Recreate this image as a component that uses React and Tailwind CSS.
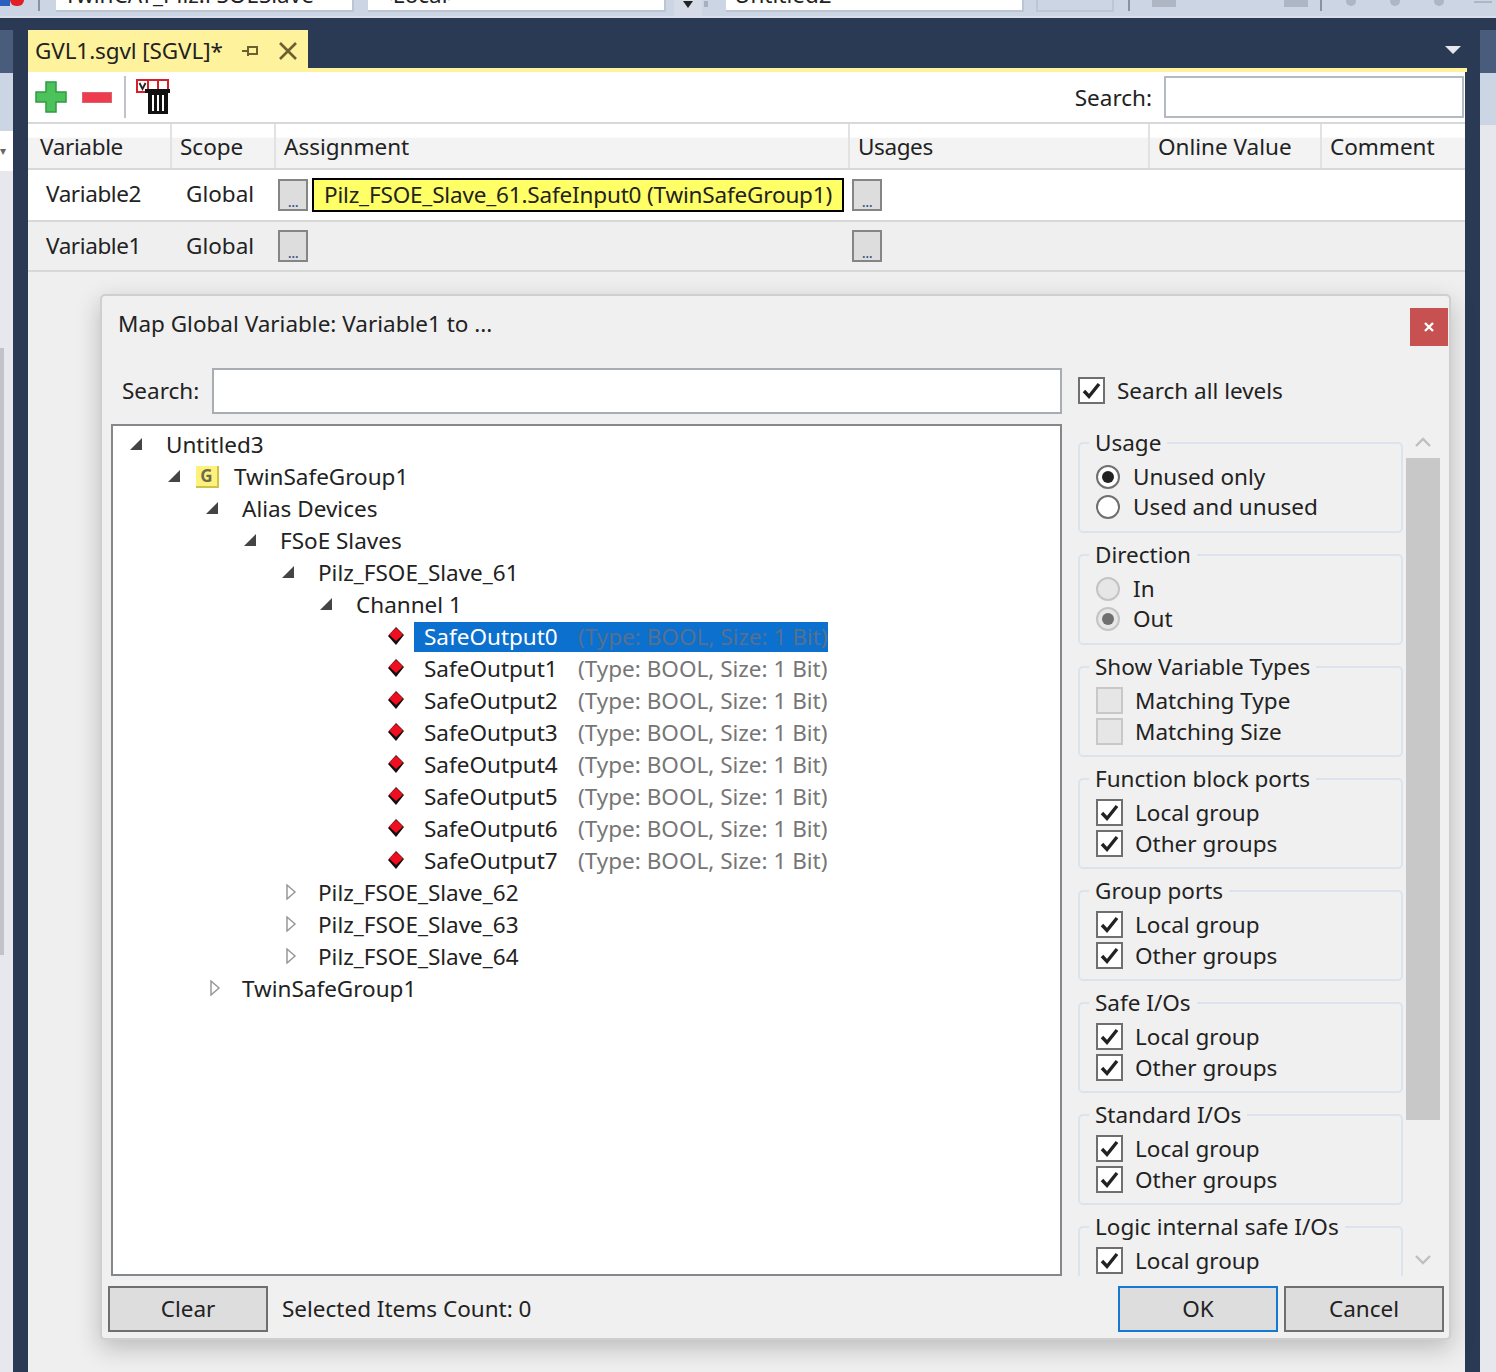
import React from "react";

const FONT = { fontFamily: '"Noto Sans", "Open Sans", sans-serif' };

function Check({ className = "" }) {
  return (
    <span className={"flex items-center justify-center bg-white border-2 border-[#6f6f6f] w-[27px] h-[27px] shrink-0 " + className}>
      <svg width="21" height="19" viewBox="0 0 21 19" fill="none">
        <path d="M3 10 L8 15.5 L18 3" stroke="#222" strokeWidth="3.4" />
      </svg>
    </span>
  );
}

function Radio({ on, disabled }) {
  return (
    <span className={"flex items-center justify-center rounded-full border-2 w-[24px] h-[24px] shrink-0 " + (disabled ? "border-[#c4c4c4] bg-[#e6e6e6]" : "border-[#6f6f6f] bg-white")}>
      {on && <span className={"block rounded-full w-[12px] h-[12px] " + (disabled ? "bg-[#6f6f6f]" : "bg-[#222]")} />}
    </span>
  );
}

function Group({ title, children }) {
  return (
    <div className="relative shrink-0 border-2 border-[#dbe4ec] rounded-[5px] w-[325px] h-[91px] mb-[21px] pt-[17px]">
      <span className="absolute left-[9px] -top-[16px] bg-[#f0f0f0] px-[6px] leading-[30px] text-[#222] whitespace-nowrap">{title}</span>
      {children}
    </div>
  );
}

function RadioRow({ label, on, disabled }) {
  return (
    <div className="flex items-center h-[30px] pl-[16px] gap-[13px] translate-y-[1px]">
      <Radio on={on} disabled={disabled} />
      <span>{label}</span>
    </div>
  );
}

function CheckRow({ label, disabled }) {
  return (
    <div className="flex items-center h-[31px] pl-[16px] gap-[12px]">
      {disabled ? <span className="block w-[27px] h-[27px] shrink-0 border-2 border-[#c8c8c8] bg-[#e6e6e6]" /> : <Check />}
      <span>{label}</span>
    </div>
  );
}

function PortGroup({ title }) {
  return (
    <Group title={title}>
      <CheckRow label="Local group" />
      <CheckRow label="Other groups" />
    </Group>
  );
}

function Ell() {
  return (
    <span className="flex items-end justify-center w-[30px] h-[32px] shrink-0 bg-[#dddddd] border-2 border-[#858585] text-[#30507a] text-[15px] leading-[16px] tracking-[-0.5px]">...</span>
  );
}

function Open() {
  return (
    <svg width="14" height="14" viewBox="0 0 14 14" className="shrink-0 -mt-[2px]">
      <path d="M13 1 V13 H1 Z" fill="#444" />
    </svg>
  );
}

function Closed() {
  return (
    <svg width="12" height="16" viewBox="0 0 12 16" className="shrink-0 -mt-[2px]">
      <path d="M2 1 L10 8 L2 15 Z" fill="#fff" stroke="#999" strokeWidth="1.5" />
    </svg>
  );
}

function Diamond() {
  return (
    <svg width="18" height="20" viewBox="0 0 18 20" className="shrink-0 -mt-[2px]">
      <path d="M9 1 L17 9 L9 19 L1 10 Z" fill="#111" />
      <path d="M9 2 L16 8.5 L9 15 L2 8.5 Z" fill="#f10f1f" />
    </svg>
  );
}

const tree = [
  { t: "Untitled3", row: "pl-[16px] gap-[23px]" },
  { t: "TwinSafeGroup1", row: "pl-[54px] gap-[15px]", icon: true },
  { t: "Alias Devices", row: "pl-[92px] gap-[23px]" },
  { t: "FSoE Slaves", row: "pl-[130px] gap-[23px]" },
  { t: "Pilz_FSOE_Slave_61", row: "pl-[168px] gap-[23px]" },
  { t: "Channel 1", row: "pl-[206px] gap-[23px]" },
];
const outs = ["SafeOutput0", "SafeOutput1", "SafeOutput2", "SafeOutput3", "SafeOutput4", "SafeOutput5", "SafeOutput6", "SafeOutput7"];
const rest = [
  { t: "Pilz_FSOE_Slave_62", row: "pl-[172px] gap-[21px]" },
  { t: "Pilz_FSOE_Slave_63", row: "pl-[172px] gap-[21px]" },
  { t: "Pilz_FSOE_Slave_64", row: "pl-[172px] gap-[21px]" },
  { t: "TwinSafeGroup1", row: "pl-[96px] gap-[21px]" },
];

export default function App() {
  return (
    <div className="w-[1496px] h-[1372px] overflow-hidden flex flex-col bg-[#2a3a55] text-[22.5px] leading-[30px] text-[#222]" style={FONT}>
      {/* top toolbar */}
      <div className="h-[18px] shrink-0 bg-[#ccd5e3] flex items-start overflow-hidden border-b-2 border-[#d9deea]">
        <div className="w-[10px] h-[6px] bg-[#2a5fc0] shrink-0" />
        <div className="w-[14px] h-[6px] bg-[#e01f26] rounded-b-full shrink-0" />
        <div className="w-[2px] h-[11px] bg-[#8a92a0] ml-[14px] mr-[16px] shrink-0" />
        <div className="w-[298px] h-[12px] bg-white border-r-2 border-b-2 border-[#bcc5d3] shrink-0 overflow-hidden pl-[8px] leading-[14px]">
          <span className="block -mt-[12px] whitespace-nowrap">TwinCAT_Pilz.FSOESlave</span>
        </div>
        <div className="w-[298px] h-[12px] ml-[14px] bg-white border-r-2 border-b-2 border-[#bcc5d3] shrink-0 overflow-hidden pl-[12px] leading-[14px]">
          <span className="block -mt-[12px]">&lt;Local&gt;</span>
        </div>
        <div className="w-[28px] h-[16px] ml-[8px] bg-[#d5dce8] shrink-0 flex justify-center">
          <svg width="14" height="10" viewBox="0 0 14 10"><path d="M2 1 H12 L7 8 Z" fill="#222" /></svg>
        </div>
        <div className="w-[4px] h-[6px] mt-[1px] ml-[2px] bg-[#a8b0be] shrink-0 mr-[18px]" />
        <div className="w-[298px] h-[12px] bg-white border-r-2 border-b-2 border-[#bcc5d3] shrink-0 overflow-hidden pl-[8px] leading-[14px]">
          <span className="block -mt-[12px]">Untitled2</span>
        </div>
        <div className="w-[78px] h-[12px] ml-[12px] border-2 border-t-0 border-[#bdc6d4] shrink-0" />
        <div className="w-[2px] h-[11px] bg-[#8a92a0] ml-[14px] shrink-0" />
        <div className="w-[24px] h-[7px] ml-[22px] bg-[#aeb6c3] shrink-0" />
        <div className="w-[24px] h-[7px] ml-[108px] bg-[#aeb6c3] shrink-0" />
        <div className="w-[2px] h-[11px] bg-[#8a92a0] ml-[12px] shrink-0" />
        <div className="w-[10px] h-[6px] ml-[24px] rounded-b-full bg-[#aeb6c3] shrink-0" />
        <div className="w-[10px] h-[6px] ml-[34px] rounded-b-full bg-[#aeb6c3] shrink-0" />
        <div className="w-[10px] h-[6px] ml-[34px] rounded-b-full bg-[#aeb6c3] shrink-0" />
        <div className="w-[18px] h-[2px] ml-[30px] mt-[1px] bg-[#aeb6c3] shrink-0" />
      </div>

      <div className="flex flex-1 min-h-0">
        {/* left rail */}
        <div className="w-[13px] shrink-0 mt-[12px] flex flex-col bg-[#e7e8ee]">
          <div className="h-[43px] bg-[#4a5c7c]" />
          <div className="h-[58px] bg-[#ccd5e3]" />
          <div className="h-[40px] bg-white flex items-center">
            <span className="text-[#666] text-[12px] leading-[12px]">▾</span>
          </div>
          <div className="w-[4px] h-[607px] mt-[177px] bg-[#c2c3c8]" />
        </div>
        <div className="w-[15px] shrink-0" />

        {/* document */}
        <div className="w-[1439px] shrink-0 flex flex-col">
          {/* tab strip */}
          <div className="h-[50px] shrink-0 flex items-end justify-between">
            <div className="w-[280px] h-[38px] bg-[#fff29d] flex items-center pl-[7px] pt-[4px]">
              <span className="whitespace-nowrap w-[188px] shrink-0 tracking-[-0.1px]">GVL1.sgvl [SGVL]*</span>
              <svg width="20" height="18" viewBox="0 0 20 18" className="ml-[18px] shrink-0" fill="none" stroke="#6b6030" strokeWidth="2">
                <path d="M1 9 H7 M7 4 V14 M7 5 H16 V12 H7" />
              </svg>
              <svg width="20" height="20" viewBox="0 0 20 20" className="ml-[17px] shrink-0" fill="none" stroke="#6b6030" strokeWidth="2.6">
                <path d="M2 2 L18 18 M18 2 L2 18" />
              </svg>
            </div>
            <svg width="16" height="10" viewBox="0 0 16 10" className="mb-[12px] mr-[6px]"><path d="M0 0 H16 L8 8 Z" fill="#e6e8ec" /></svg>
          </div>
          <div className="h-[4px] shrink-0 bg-[#fff29d]" />

          {/* body */}
          <div className="flex-1 min-h-0 w-[1437px] bg-[#efefef] flex flex-col">
            {/* toolbar */}
            <div className="h-[52px] shrink-0 bg-white flex items-center border-b-2 border-[#d8d8d8]">
              <svg width="32" height="32" viewBox="0 0 32 32" className="ml-[7px] shrink-0">
                <path d="M11 1 H21 V11 H31 V21 H21 V31 H11 V21 H1 V11 H11 Z" fill="#4cc35a" stroke="#2f9a43" strokeWidth="1.5" />
              </svg>
              <span className="block w-[30px] h-[11px] ml-[15px] bg-[#ee3b4e] border border-[#d9636f] shrink-0" />
              <span className="block w-[2px] h-[42px] ml-[12px] bg-[#c0c4c8] shrink-0" />
              <svg width="36" height="36" viewBox="0 0 36 36" className="ml-[10px] shrink-0">
                <path d="M1 1 H32 V13 H1 Z" fill="#fff" stroke="#d3202a" strokeWidth="2" />
                <path d="M12 1 V13 M22 1 V10" stroke="#d3202a" strokeWidth="2" />
                <path d="M3.5 4 L6.5 10 L9.5 4" stroke="#222" strokeWidth="1.8" fill="none" />
                <path d="M9 10 H34 V14 H9 Z" fill="#111" />
                <path d="M12 13 H32 V35 H12 Z" fill="#111" />
                <path d="M17 16 V32 M22 16 V32 M27 16 V32" stroke="#fff" strokeWidth="2" />
              </svg>
              <span className="ml-auto mt-[2px]">Search:</span>
              <span className="block w-[300px] h-[42px] ml-[12px] mr-[1px] bg-white border-2 border-[#b4bac2]" />
            </div>

            {/* header */}
            <div className="h-[46px] shrink-0 flex items-center border-b-2 border-[#d8d8d8] bg-[linear-gradient(#ffffff_30%,#f3f3f3_32%)]">
              <div className="w-[144px] h-full flex items-center pl-[12px] pt-[2px] border-r-2 border-[#e2e2e2] tracking-[-0.35px]">Variable</div>
              <div className="w-[104px] h-full flex items-center pl-[8px] pt-[2px] border-r-2 border-[#e2e2e2]">Scope</div>
              <div className="w-[574px] h-full flex items-center pl-[8px] pt-[2px] border-r-2 border-[#e2e2e2]">Assignment</div>
              <div className="w-[300px] h-full flex items-center pl-[8px] pt-[2px] border-r-2 border-[#e2e2e2] tracking-[-0.4px]">Usages</div>
              <div className="w-[172px] h-full flex items-center pl-[8px] pt-[2px] border-r-2 border-[#e2e2e2]">Online Value</div>
              <div className="flex-1 h-full flex items-center pl-[8px] pt-[2px]">Comment</div>
            </div>

            {/* row 1 */}
            <div className="h-[52px] shrink-0 flex items-center bg-white border-b-2 border-[#d8d8d8]">
              <span className="w-[158px] pl-[18px] shrink-0 -mt-[3px] tracking-[-0.4px]">Variable2</span>
              <span className="w-[92px] shrink-0 -mt-[3px]">Global</span>
              <Ell />
              <span className="flex items-center w-[532px] h-[34px] ml-[4px] pl-[10px] bg-[#ffff66] border-2 border-black shrink-0 whitespace-nowrap overflow-hidden tracking-[-0.17px]">Pilz_FSOE_Slave_61.SafeInput0 (TwinSafeGroup1)</span>
              <span className="ml-[8px]"><Ell /></span>
            </div>
            {/* row 2 */}
            <div className="h-[50px] shrink-0 flex items-center border-b-2 border-[#d8d8d8]">
              <span className="w-[158px] pl-[18px] shrink-0 -mt-[1px] tracking-[-0.4px]">Variable1</span>
              <span className="w-[92px] shrink-0 -mt-[1px]">Global</span>
              <Ell />
              <span className="w-[544px] shrink-0" />
              <Ell />
            </div>

            {/* dialog */}
            <div className="shrink-0 w-[1351px] h-[1046px] ml-[72px] mt-[22px] bg-[#f0f0f0] border-2 border-[#cfcfcf] rounded-[5px] shadow-[0_8px_24px_rgba(0,0,0,0.22)] flex flex-col">
              <div className="h-[72px] shrink-0 flex items-start">
                <span className="ml-[16px] mt-[13px]">Map Global Variable: Variable1 to ...</span>
                <span className="ml-auto mr-[1px] mt-[12px] w-[38px] h-[38px] bg-[#c75050] flex items-center justify-center">
                  <svg width="12" height="12" viewBox="0 0 12 12" fill="none" stroke="#fff" strokeWidth="2.4"><path d="M2 2 L10 10 M10 2 L2 10" /></svg>
                </span>
              </div>
              <div className="flex-1 min-h-0 flex pl-[9px]">
                {/* left column */}
                <div className="w-[952px] shrink-0 flex flex-col">
                  <div className="h-[56px] shrink-0 flex items-start">
                    <span className="ml-[11px] mt-[8px] w-[90px] shrink-0">Search:</span>
                    <span className="block w-[850px] h-[46px] bg-white border-2 border-[#a8adb3]" />
                  </div>
                  <div className="w-[951px] h-[852px] shrink-0 bg-white border-2 border-[#84888c] pt-[3px] overflow-hidden">
                    {tree.map((n) => (
                      <div key={n.t} className={"flex items-center h-[32px] " + n.row}>
                        <Open />
                        {n.icon && (
                          <span className="flex items-center justify-center w-[23px] h-[22px] bg-[#fff27a] text-[#6b6b50] text-[17px] font-bold leading-[18px] border-r-2 border-b-2 border-[#cfc24a] shrink-0">G</span>
                        )}
                        <span className="whitespace-nowrap">{n.t}</span>
                      </div>
                    ))}
                    {outs.map((o, i) => (
                      <div key={o} className="flex items-center h-[32px] pl-[274px]">
                        <Diamond />
                        <span className={"flex items-center h-[30px] w-[414px] ml-[9px] pl-[10px] whitespace-nowrap " + (i === 0 ? "bg-[#0c70cf] text-white" : "")}>
                          <span className="w-[154px] shrink-0">{o}</span>
                          <span className={i === 0 ? "text-[#56708e]" : "text-[#767676]"}>(Type: BOOL, Size: 1 Bit)</span>
                        </span>
                      </div>
                    ))}
                    {rest.map((n, i) => (
                      <div key={i} className={"flex items-center h-[32px] " + n.row}>
                        <Closed />
                        <span className="whitespace-nowrap">{n.t}</span>
                      </div>
                    ))}
                  </div>
                </div>

                {/* right column */}
                <div className="flex-1 min-w-0 flex flex-col pl-[15px]">
                  <div className="h-[56px] shrink-0 flex items-start pt-[9px] gap-[12px]">
                    <Check />
                    <span className="-mt-[1px]">Search all levels</span>
                  </div>
                  <div className="flex w-[362px] h-[852px] shrink-0">
                    <div className="w-[326px] h-full overflow-hidden flex flex-col pt-[18px] shrink-0">
                      <Group title="Usage">
                        <RadioRow label="Unused only" on />
                        <RadioRow label="Used and unused" />
                      </Group>
                      <Group title="Direction">
                        <RadioRow label="In" disabled />
                        <RadioRow label="Out" on disabled />
                      </Group>
                      <Group title="Show Variable Types">
                        <CheckRow label="Matching Type" disabled />
                        <CheckRow label="Matching Size" disabled />
                      </Group>
                      <PortGroup title="Function block ports" />
                      <PortGroup title="Group ports" />
                      <PortGroup title="Safe I/Os" />
                      <PortGroup title="Standard I/Os" />
                      <PortGroup title="Logic internal safe I/Os" />
                    </div>
                    <div className="w-[34px] ml-[2px] h-full flex flex-col items-center shrink-0">
                      <svg width="16" height="10" viewBox="0 0 16 10" className="mt-[13px] shrink-0" fill="none" stroke="#bfbfbf" strokeWidth="2.4"><path d="M1 9 L8 2 L15 9" /></svg>
                      <div className="w-[34px] h-[662px] mt-[11px] bg-[#c8c8c8] shrink-0" />
                      <svg width="16" height="10" viewBox="0 0 16 10" className="mt-[135px] shrink-0" fill="none" stroke="#bfbfbf" strokeWidth="2.4"><path d="M1 1 L8 8 L15 1" /></svg>
                    </div>
                  </div>
                </div>
              </div>
              {/* footer */}
              <div className="h-[60px] shrink-0 flex items-start pt-[8px] pl-[6px]">
                <span className="flex items-center justify-center w-[160px] h-[46px] bg-[#dddddd] border-2 border-[#6f6f6f]">Clear</span>
                <span className="ml-[14px] mt-[8px]">Selected Items Count: 0</span>
                <span className="flex items-center justify-center w-[160px] h-[46px] ml-auto bg-[#dddddd] border-2 border-[#1479d2]">OK</span>
                <span className="flex items-center justify-center w-[160px] h-[46px] ml-[6px] mr-[5px] bg-[#dddddd] border-2 border-[#6f6f6f]">Cancel</span>
              </div>
            </div>
          </div>
        </div>

        {/* right rail */}
        <div className="flex-1 min-w-0 ml-[13px] mt-[12px] flex flex-col bg-[#e7e8ee]">
          <div className="h-[43px] bg-[#4a5c7c]" />
          <div className="h-[52px] bg-[#ccd5e3]" />
        </div>
      </div>
    </div>
  );
}
